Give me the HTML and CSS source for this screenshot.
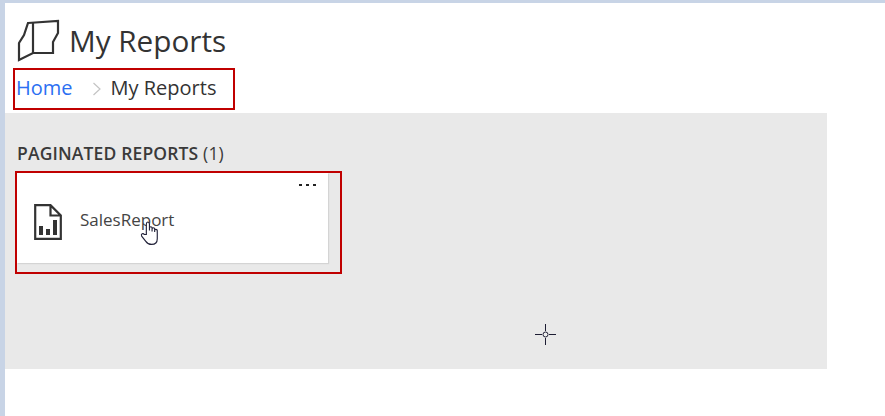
FILE: index.html
```html
<!DOCTYPE html>
<html lang="en">
<head>
  <meta charset="UTF-8" />
  <meta name="viewport" content="width=device-width, initial-scale=1.0" />
  <title>My Reports</title>
  <link rel="stylesheet" href="styles.css">
</head>
<body>
  <div class="page">
    <div class="title-row">
      <svg class="folder-icon" width="44" height="44" viewBox="0 0 44 44" fill="none" stroke="#333" stroke-width="2.2">
        <path d="M11 5 L41 3 V15 L36 24 V35 H16 L2 42 V25 L7 17 Z" />
        <path d="M16 4.7 V35" />
      </svg>
      <h1>My Reports</h1>
    </div>
    <div class="crumbs">
      <a href="#">Home</a>
      <svg class="chevron" width="10" height="14" viewBox="0 0 10 14" fill="none" stroke="#c4c4c4" stroke-width="1.2">
        <path d="M1.5 1 L8 7 L1.5 13" />
      </svg>
      <span>My Reports</span>
    </div>
    <div class="panel">
      <h2>PAGINATED REPORTS <span class="count">(1)</span></h2>
      <div class="highlight">
        <div class="card">
          <div class="dots"><i></i><i></i><i></i></div>
          <svg class="report-icon" width="28" height="36" viewBox="0 0 28 36" fill="none">
            <path d="M1.2 1.2 H16.5 L26.8 11.5 V34.8 H1.2 Z M16.5 1.2 V11.5 H26.8" stroke="#333" stroke-width="2.2" />
            <rect x="5" y="22" width="4" height="9" fill="#333" />
            <rect x="12" y="25" width="4" height="6" fill="#333" />
            <rect x="19" y="16" width="4" height="15" fill="#333" />
          </svg>
          <span class="card-name">SalesReport</span>
        </div>
      </div>
      <svg class="hand" width="21" height="25" viewBox="0 0 20 24" fill="#fff" stroke="#23233a" stroke-width="1.1">
        <path d="M6 13 V3 Q6 1 7.5 1 Q9 1 9 3 V9 V6.5 Q9 5.5 10.3 5.5 Q11.5 5.5 11.5 6.5 V10 V7.5 Q11.5 6.5 12.8 6.5 Q14 6.5 14 7.5 V10.5 V8.8 Q14 8 15.2 8 Q16.5 8 16.5 9 V17 Q16.5 22.5 11 22.5 Q7.5 22.5 5.5 19.5 L1.5 14.5 Q0.8 13 2 12.3 Q3.2 11.8 4.2 13 Z" />
      </svg>
      <svg class="crosshair" width="21" height="21" viewBox="0 0 21 21" fill="none" stroke="#1d1d33">
        <path d="M10.5 0 V7 M10.5 14 V21 M0 10.5 H7 M14 10.5 H21" />
        <circle cx="10.5" cy="10.5" r="2.5" fill="#eee" />
      </svg>
    </div>
  </div>
</body>
</html>
```

FILE: styles.css
```css
body {
  margin: 0;
  background: #fff;
  font-family: "Open Sans", "Liberation Sans", sans-serif;
  color: #333;
}

.page {
  height: 413px;
  border-top: 3px solid #c8d4e6;
  border-left: 5px solid #c8d4e6;
  overflow: hidden;
}

.title-row {
  display: flex;
  align-items: center;
  gap: 8px;
  box-sizing: border-box;
  height: 65px;
  padding: 9px 0 0 12px;
}

.title-row h1 {
  margin: 0;
  font-size: 29.7px;
  font-weight: 400;
}

.crumbs {
  display: flex;
  align-items: center;
  box-sizing: border-box;
  width: 222px;
  height: 42px;
  margin-left: 8px;
  padding: 0 0 3px 1px;
  border: 2px solid #c00000;
  font-size: 20px;
}

.crumbs a {
  color: #2b6ff2;
  text-decoration: none;
}

.chevron {
  margin: 3px 9px 0 19px;
}

.panel {
  position: relative;
  width: 822px;
  height: 256px;
  margin-top: 3px;
  padding: 29px 0 0 10px;
  box-sizing: border-box;
  background: #e9e9e9;
}

.panel h2 {
  margin: 0 0 0 2px;
  font-size: 17.5px;
  line-height: 22px;
  font-weight: 600;
  letter-spacing: 0.15px;
  color: #3a3a3a;
}

.count {
  font-weight: 400;
}

.highlight {
  box-sizing: border-box;
  width: 327px;
  height: 103px;
  margin-top: 7px;
  padding: 0 12px 9px 0;
  border: 2px solid #c00000;
}

.card {
  position: relative;
  display: flex;
  align-items: center;
  gap: 18px;
  height: 100%;
  padding-left: 17px;
  box-sizing: border-box;
  background: #fff;
  box-shadow: 1px 1px 1px #d4d4d4;
}

.report-icon {
  margin-top: 8px;
}

.dots {
  position: absolute;
  top: 11px;
  right: 12px;
  display: flex;
  gap: 4px;
}

.dots i {
  width: 3px;
  height: 2px;
  background: #222;
}

.card-name {
  padding-top: 2px;
  font-size: 17px;
  color: #444;
}

.hand {
  position: absolute;
  left: 135px;
  top: 108px;
}

.crosshair {
  position: absolute;
  left: 530px;
  top: 211px;
}
```
